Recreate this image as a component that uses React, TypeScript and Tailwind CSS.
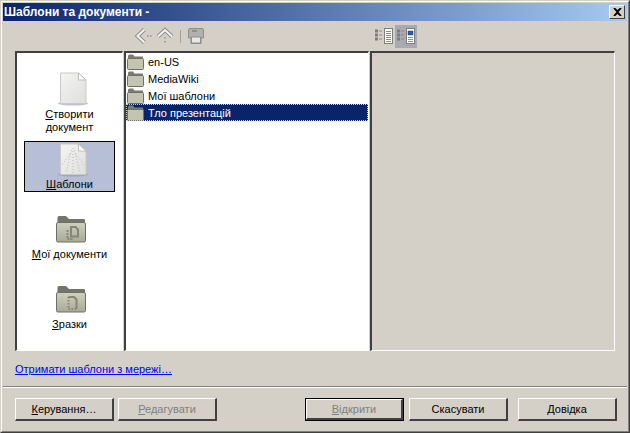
import type { ReactNode } from "react";

const folders = ["en-US", "MediaWiki", "Мої шаблони", "Тло презентацій"];

function Page({ rays }: { rays?: boolean }) {
   return (
      <svg width="34" height="35" viewBox="0 0 34 35" className="ml-[6px]">
         <defs>
            <linearGradient id={rays ? "pg2" : "pg1"} x1="0" y1="0" x2="1" y2="1">
               <stop offset="0" stopColor="#f4f4f3" />
               <stop offset="1" stopColor="#dededc" />
            </linearGradient>
         </defs>
         <ellipse cx="17" cy="31.5" rx="15" ry="2" fill="#8f93a0" opacity="0.55" />
         <path d="M4.5 1H22.500L30 8V31.500H4.5Z" fill={`url(#${rays ? "pg2" : "pg1"})`} stroke="#c9c9c6" />
         <path d="M22.500 1V8H30Z" fill="#fff" stroke="#bdbdba" />
         {rays && (
            <g stroke="#b9b9b6" strokeDasharray="1 2" fill="none">
               <path d="M17 5V30M15.500 7L10 30M18.500 7L24 30M14 11L6 22M20 11L28 22" />
            </g>
         )}
      </svg>
   );
}

function BigFolder({ kind }: { kind: "docs" | "samples" }) {
   return (
      <svg width="30" height="27" viewBox="0 0 30 27" className="ml-[2px]">
         <defs>
            <linearGradient id={`bf-${kind}`} x1="0" y1="0" x2="0" y2="1">
               <stop offset="0" stopColor="#cfd0bd" />
               <stop offset="1" stopColor="#a8aa96" />
            </linearGradient>
         </defs>
         <path d="M1.5 24V1.500Q1.5 0 3 0H10L13 3H28Q29 3 29 4V24Z" fill="#74756a" />
         <path d="M.5 8Q.5 6.500 2 6.500H28Q29.500 6.500 29.500 8V24.500Q29.500 26 28 26H2Q.5 26 .5 24.500Z" fill={`url(#bf-${kind})`} stroke="#6f7065" />
         {kind === "docs" ? (
            <g fill="none" stroke="#85867a" strokeWidth="2">
               <path d="M15 11H19.500L22 13.500V20.500H15Z" />
               <path d="M11.500 14V23H17" strokeDasharray="2 1" />
            </g>
         ) : (
            <g fill="none" stroke="#85867a" strokeWidth="2">
               <path d="M12.500 11H18L20.500 13.500V23" />
               <path d="M12.500 11V23H20" strokeDasharray="1.500 1.500" />
            </g>
         )}
      </svg>
   );
}

function SmallFolder() {
   return (
      <svg width="17" height="16" viewBox="0 0 17 16" className="shrink-0">
         <path d="M1 13V2Q1 .5 2.500 .5H6L7.500 2.500H16V13Z" fill="#7b7c6f" />
         <path d="M.5 5.500Q.5 4.500 1.500 4.500H15.500Q16.500 4.500 16.500 5.500V14.500Q16.500 15.500 15.500 15.500H1.500Q.5 15.500 .5 14.500Z" fill="#c4c5b0" stroke="#6f7065" />
      </svg>
   );
}

function Side({ label, u, rest, selected, className, children }: { label?: ReactNode; u: string; rest: string; selected?: boolean; className: string; children: ReactNode }) {
   return (
      <div className={`mx-[7px] flex flex-col items-center border text-center leading-[13px] ${selected ? "border-black bg-[#b6bfd5]" : "border-transparent"} ${className}`}>
         {children}
         <div>
            <span className="underline underline-offset-1">{u}</span>
            {rest}
            {label}
         </div>
      </div>
   );
}

function Btn({ u, rest, disabled, isDefault, className }: { u?: string; rest: string; disabled?: boolean; isDefault?: boolean; className?: string }) {
   const inner = (
      <div className="flex h-full w-full items-center justify-center border-t border-l border-t-white border-l-white border-r-2 border-b-2 border-r-[#404040] border-b-[#404040]">
         <span className={disabled ? "text-[#808080]" : "text-black"}>
            {u && <span className="underline underline-offset-1">{u}</span>}
            {rest}
         </span>
      </div>
   );
   return (
      <div className={`h-[23px] w-[99px] shrink-0 ${isDefault ? "border border-black" : ""} ${className ?? ""}`}>{inner}</div>
   );
}

function Sunken({ className, children }: { className: string; children?: ReactNode }) {
   return (
      <div className={`border-t-2 border-l-2 border-t-[#404040] border-l-[#404040] border-r border-b border-r-white border-b-white ${className}`}>{children}</div>
   );
}

function ToolIcons() {
   return (
      <div className="flex h-[30px] items-center pl-[130px]">
         <svg width="22" height="18" viewBox="0 0 22 18">
            <path d="M11.500 2.500L4.500 9L11.500 15.500" fill="none" stroke="#8f8f8b" strokeWidth="4" />
            <path d="M11.500 2.500L4.500 9L11.500 15.500" fill="none" stroke="#f4f3f0" strokeWidth="2" />
            <path d="M14 9h1.500M17 9h1.500" stroke="#8f8f8b" strokeWidth="1.500" />
         </svg>
         <svg width="20" height="18" viewBox="0 0 20 18">
            <path d="M3 9.500L10 3L17 9.500" fill="none" stroke="#8f8f8b" strokeWidth="4" />
            <path d="M3 9.500L10 3L17 9.500" fill="none" stroke="#f4f3f0" strokeWidth="2" />
            <path d="M10 10v1.500M10 14v1.500" stroke="#8f8f8b" strokeWidth="1.500" />
         </svg>
         <div className="ml-[5px] h-[13px] w-px bg-[#a0a09c]" />
         <svg width="18" height="18" viewBox="0 0 18 18" className="ml-[6px]">
            <path d="M1.500 3Q1.500 1.500 3 1.500H15Q16.500 1.500 16.500 3V11H14V16.500H4V11H1.500Z" fill="#b0b0ac" stroke="#8e8e8a" />
            <rect x="4.500" y="10" width="9" height="6" fill="#e8e7e3" stroke="#8e8e8a" />
            <path d="M5 4h5" stroke="#8e8e8a" strokeWidth="2" />
         </svg>
         <div className="ml-[170px]">
            <ViewIcon />
         </div>
         <div className="ml-[2px] flex h-[23px] w-[22px] items-center justify-center bg-[#a9a9b1]">
            <ViewIcon active />
         </div>
      </div>
   );
}

function ViewIcon({ active }: { active?: boolean }) {
   return (
      <svg width="18" height="17" viewBox="0 0 18 17">
         {[3, 7, 11].map((y) => (
            <g key={y}>
               <rect x=".5" y={y - 1} width="2" height="2" fill="#fff" stroke="#7d7d79" strokeWidth="1" />
               <path d={`M4 ${y}h3`} stroke="#8a8a86" strokeWidth="1" />
            </g>
         ))}
         <rect x="9.500" y=".5" width="8" height="15" fill="#fff" stroke="#7d7d79" />
         {active ? (
            <>
               <rect x="11" y="3" width="5" height="4" fill="#2e5fa3" stroke="#1b3a70" strokeWidth="0.5" />
               <path d="M11 9.500h5M11 11.500h5M11 13.500h5" stroke="#8a8a86" />
            </>
         ) : (
            <path d="M11 3.500h5M11 5.500h5M11 7.500h5M11 9.500h5M11 11.500h5M11 13.500h5" stroke="#8a8a86" />
         )}
      </svg>
   );
}

export default function App() {
   return (
      <div className="relative h-[433px] w-[630px] overflow-hidden border-r border-b border-r-[#404040] border-b-[#404040] border-t border-l border-t-[#d4d0c8] border-l-[#d4d0c8] bg-[#d4d0c8] font-['Liberation_Sans',sans-serif] text-[11px] text-black">
         <div className="flex h-full flex-col border-t border-l border-t-white border-l-white border-r border-b border-r-[#808080] border-b-[#808080] p-px">
            <div className="flex h-[18px] shrink-0 items-center justify-between bg-[linear-gradient(90deg,#0a246a,#a6caf0)] pl-[1px] pr-[2px] text-white">
               <span className="text-[12px] font-bold">Шаблони та документи -</span>
               <div className="flex h-[14px] w-[16px] items-center justify-center border-t border-l border-t-white border-l-white border-r border-b border-r-[#404040] border-b-[#404040] bg-[#d4d0c8]">
                  <svg width="9" height="8" viewBox="0 0 9 8">
                     <path d="M1 0L4.500 3L8 0M1 8L4.500 5L8 8M1 0L8 8M8 0L1 8" fill="none" stroke="#000" strokeWidth="1.600" />
                  </svg>
               </div>
            </div>
            <ToolIcons />
            <div className="ml-[12px] flex h-[300px] w-[601px] gap-px">
               <Sunken className="w-[108px] bg-white pt-[18px]">
                  <Side u="С" rest="творити" className="" label={<span className="block">документ</span>}>
                     <Page />
                     <div className="h-px" />
                  </Side>
                  <Side u="Ш" rest="аблони" selected className="mt-[6px] h-[51px] pt-px">
                     <Page rays />
                  </Side>
                  <Side u="М" rest="ої документи" className="mt-[19px] pt-[4px]">
                     <BigFolder kind="docs" />
                     <div className="h-[5px]" />
                  </Side>
                  <Side u="З" rest="разки" className="mt-[19px] pt-[4px]">
                     <BigFolder kind="samples" />
                     <div className="h-[5px]" />
                  </Side>
               </Sunken>
               <Sunken className="w-[245px] bg-white">
                  {folders.map((f, i) => (
                     <div key={f} className={`flex h-[17px] items-center gap-[4px] pl-[1px] ${i === 3 ? "bg-[#0a246a] text-white outline-1 -outline-offset-1 outline-dotted outline-[#d4d0c8]" : ""}`}>
                        <SmallFolder />
                        <span className="pt-px">{f}</span>
                     </div>
                  ))}
               </Sunken>
               <Sunken className="w-[245px]" />
            </div>
            <div className="ml-[12px] mt-[11px] h-[14px] leading-[14px]">
               <a className="text-[#0000ff] underline">Отримати шаблони з мережі…</a>
            </div>
            <div className="mt-[10px] h-[2px] border-t border-b border-t-[#808080] border-b-white" />
            <div className="ml-[12px] mt-[10px] flex">
               <Btn u="К" rest="ерування…" />
               <Btn u="Р" rest="едагувати" disabled className="ml-[4px]" />
               <Btn u="В" rest="ідкрити" disabled isDefault className="ml-[88px]" />
               <Btn rest="Скасувати" className="ml-[5px]" />
               <Btn u="Д" rest="овідка" className="ml-[10px]" />
            </div>
         </div>
      </div>
   );
}
